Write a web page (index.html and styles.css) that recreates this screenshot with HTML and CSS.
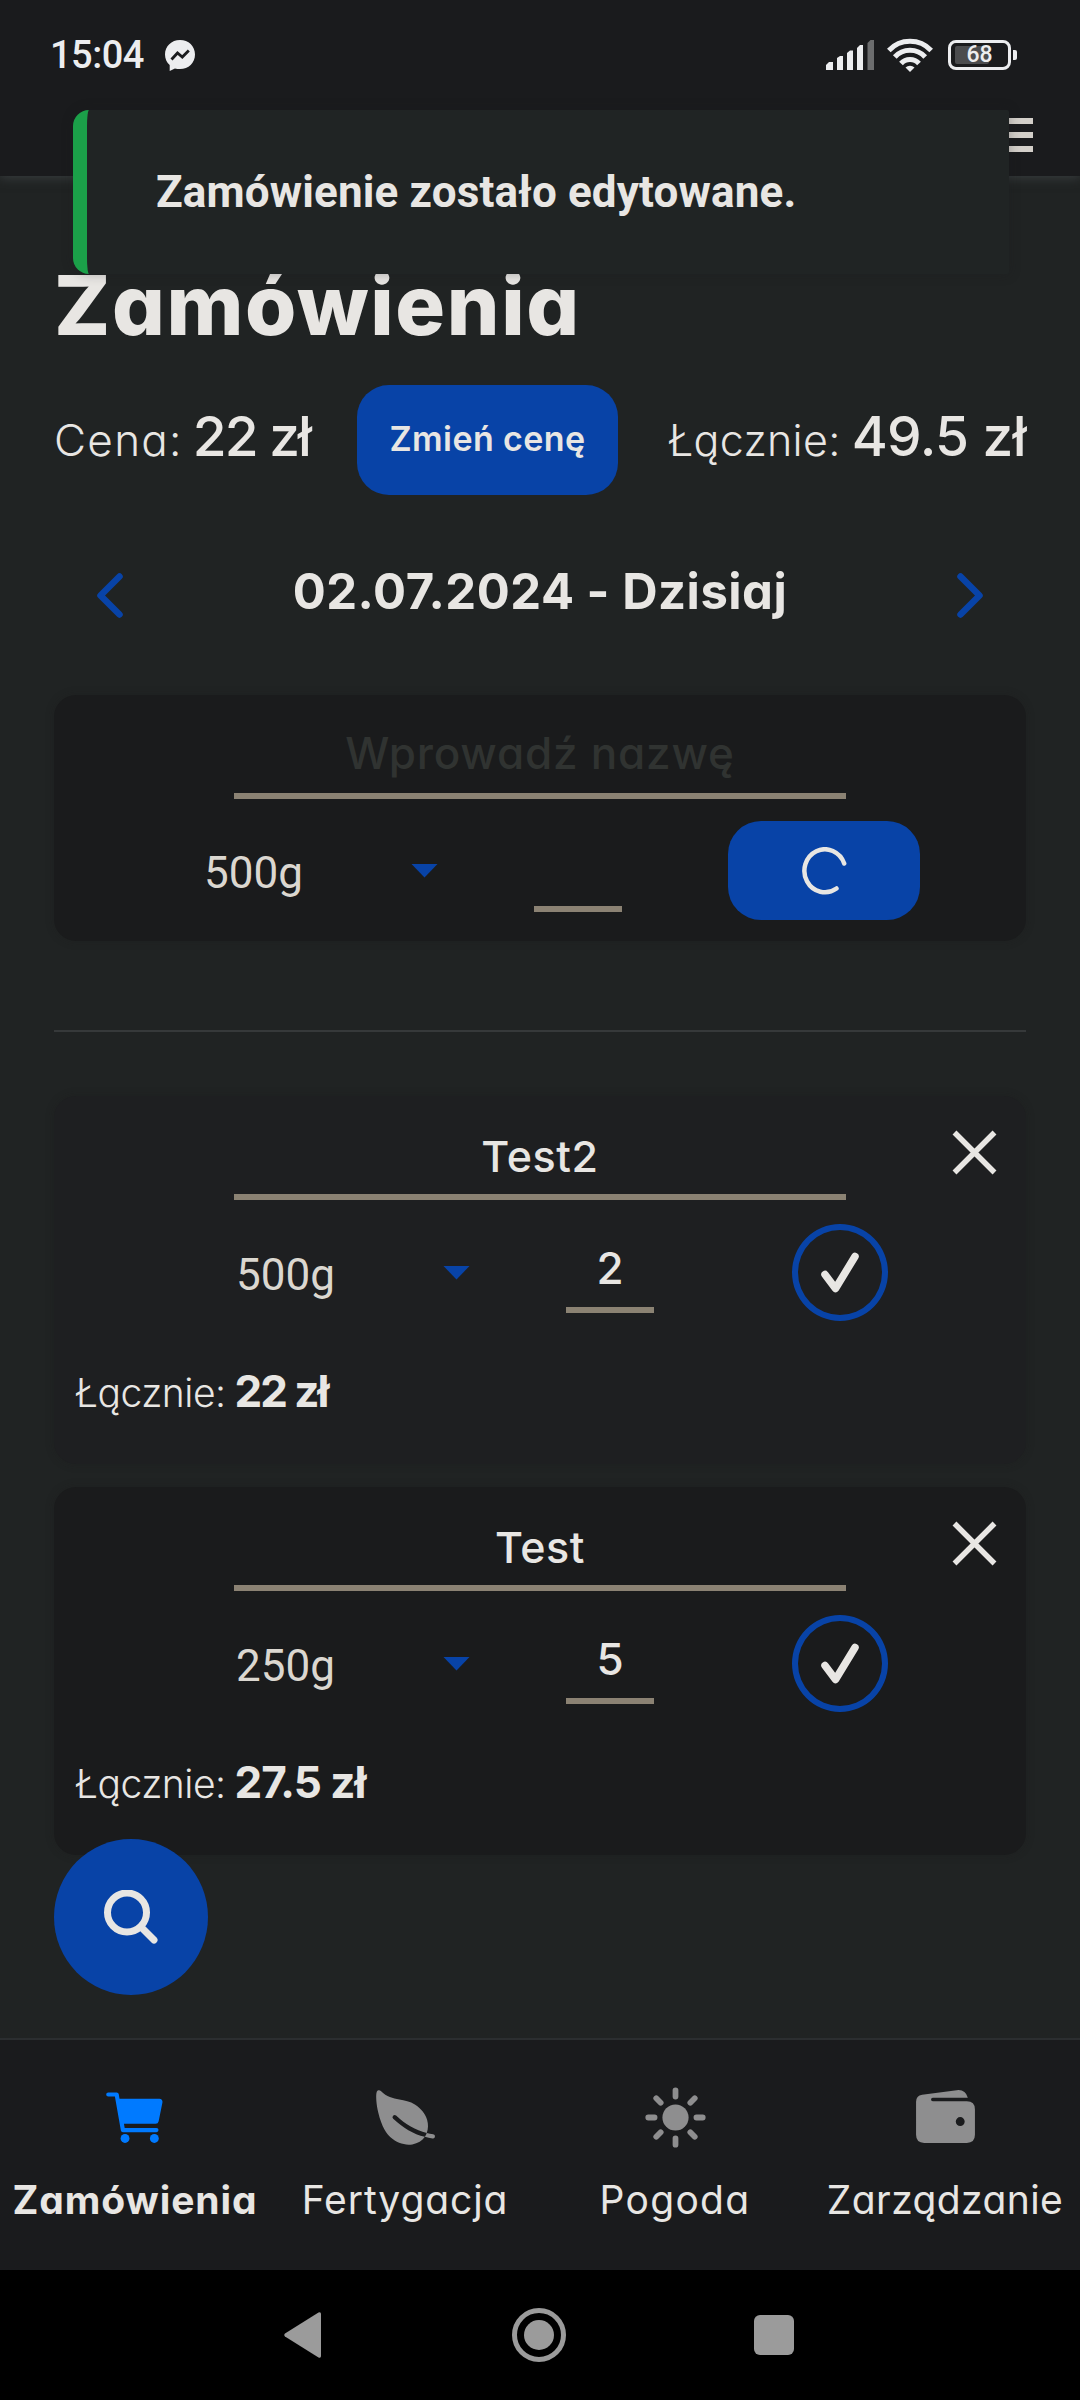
FILE: index.html
```
<!DOCTYPE html>
<html lang="pl">
<head>
<meta charset="utf-8">
<title>Zamówienia</title>
<link rel="stylesheet" href="styles.css">
</head>
<body>
<div class="app">
  <header class="topbar">
    <div class="status">
      <span class="time">15:04</span>
      <svg class="messenger" viewBox="0 0 30 31"><path fill="#ecedef" d="M15 0C6.500 0 0 6.200 0 14.500c0 4.300 1.800 8 4.700 10.600V31l5.200-2.600c1.600.5 3.300.7 5.100.7 8.500 0 15-6.200 15-14.600S23.500 0 15 0z"/><path fill="none" stroke="#1a1b1d" stroke-width="2.800" d="M6.500 19.500l6-6.500 4.800 4 6.500-6.500"/></svg>
      <svg class="signal" viewBox="0 0 48 30"><g fill="#ecedef"><path d="M0 30v-5l3-3h4v8z"/><path d="M11 30V18l3-2h3v14z"/><path d="M21 30V13l3-2.500h3V30z"/><path d="M31 30V8l3-3h3v25z"/></g><path fill="#6c6d6e" d="M41.500 30V3l3-3H48v30z"/></svg>
      <svg class="wifi" viewBox="0 0 46 34"><g fill="none" stroke="#ecedef" stroke-width="5"><path d="M1.800 12.500a29 29 0 0 1 42.400 0"/><path d="M7.800 19a20.500 20.500 0 0 1 30.400 0"/><path d="M14 25.500a12 12 0 0 1 18 0"/></g><path fill="#ecedef" d="M18.500 29.500a6.500 6.500 0 0 1 9 0L23 34z"/></svg>
      <div class="battery"><span class="level"></span><span class="percent">68</span></div>
    </div>
    <button class="menu" aria-label="Menu"><i></i><i></i><i></i></button>
  </header>

  <main class="content">
    <h1 class="title"><span>Zamówienia</span></h1>

    <section class="prices">
      <p class="price unit"><span class="label">Cena:</span><strong class="value">22 zł</strong></p>
      <button class="change"><span>Zmień cenę</span></button>
      <p class="price total"><span class="label">Łącznie:</span><strong class="value">49.5 zł</strong></p>
    </section>

    <nav class="day">
      <svg class="chevron" viewBox="0 0 26 45"><path d="M22.500 3.500L3.500 22.500l19 19"/></svg>
      <h2 class="date">02.07.2024 - Dzisiaj</h2>
      <svg class="chevron" viewBox="0 0 26 45"><path d="M3.500 3.500l19 19-19 19"/></svg>
    </nav>

    <section class="card new">
      <div class="name placeholder"><span>Wprowadź nazwę</span></div>
      <div class="fields">
        <div class="select"><span>500g</span><i class="caret"></i></div>
        <div class="qty"></div>
        <button class="submit" aria-label="Dodaj"><svg class="spinner" viewBox="0 0 46 48"><path d="M43.200 16.500A20.500 21.500 0 1 0 35.500 41.500"/></svg></button>
      </div>
    </section>

    <hr class="rule">

    <section class="orders">
      <article class="card order saved">
        <svg class="close" viewBox="0 0 45 45"><path d="M2.500 2.500l40 40m0-40l-40 40"/></svg>
        <div class="name">Test2</div>
        <div class="fields">
          <div class="select"><span>500g</span><i class="caret"></i></div>
          <div class="qty">2</div>
          <button class="done" aria-label="Gotowe"><svg class="check" viewBox="0 0 38 41"><path d="M4 22.500l10.500 14L34 4.500"/></svg></button>
        </div>
        <p class="sum"><span class="sumlabel">Łącznie:</span><strong class="sumvalue">22 zł</strong></p>
      </article>

      <article class="card order">
        <svg class="close" viewBox="0 0 45 45"><path d="M2.500 2.500l40 40m0-40l-40 40"/></svg>
        <div class="name">Test</div>
        <div class="fields">
          <div class="select"><span>250g</span><i class="caret"></i></div>
          <div class="qty">5</div>
          <button class="done" aria-label="Gotowe"><svg class="check" viewBox="0 0 38 41"><path d="M4 22.500l10.500 14L34 4.500"/></svg></button>
        </div>
        <p class="sum"><span class="sumlabel">Łącznie:</span><strong class="sumvalue">27.5 zł</strong></p>
      </article>
    </section>
  </main>

  <nav class="tabs">
    <a class="tab active"><svg class="icon" viewBox="0 0 512 512"><circle cx="176" cy="416" r="34"/><circle cx="400" cy="416" r="34"/><path d="M456.800 120.780a23.920 23.920 0 00-18.560-8.780H133.890l-6.130-34.780A16 16 0 00112 64H48a16 16 0 000 32h50.580l45.660 258.780A16 16 0 00160 368h256a16 16 0 000-32H173.420l-5.640-32h241.660A24.070 24.070 0 00433 284.710l28.800-144a24 24 0 00-5-19.930z"/></svg><span>Zamówienia</span></a>
    <a class="tab"><svg class="icon" viewBox="0 0 512 512"><path d="M161.350 242a16 16 0 0122.620-.68c73.630 69.360 147.510 111.560 234.450 133.070 11.730-32 12.770-67.220 2.640-101.580-13.440-45.590-44.740-85.310-90.490-114.860-40.840-26.380-81.660-33.250-121.150-39.890-49.820-8.380-96.880-16.300-141.790-63.850-5-5.260-11.810-7.370-18.320-5.660-7.440 2-12.430 7.880-14.820 17.600-5.600 22.750-2 86.510 13.750 153.820 25.290 108.140 65.650 162.860 95.060 189.730 38 34.690 87.620 53.900 136.930 53.900a186 186 0 0027.770-2.040c41.710-6.320 76.430-27.270 96-57.750-89.490-23.280-165.940-67.550-242-139.160a16 16 0 01-.65-22.650zM467.430 384.190c-16.830-2.590-33.130-5.840-49-9.770a157.710 157.710 0 01-12.130 25.680c-.73 1.250-1.500 2.490-2.290 3.710a584.210 584.210 0 0058.560 12 16 16 0 104.870-31.620z"/></svg><span>Fertygacja</span></a>
    <a class="tab"><svg class="icon" viewBox="0 0 512 512"><circle cx="256" cy="256" r="100"/><path class="rays" d="M256 48v48M256 416v48M48 256h48M416 256h48M108.900 108.900l33.900 33.900M369.200 369.200l33.900 33.900M108.900 403.100l33.900-33.900M369.200 142.800l33.900-33.900"/></svg><span class="wide">Pogoda</span></a>
    <a class="tab"><svg class="icon" viewBox="0 0 66 66"><path fill-rule="evenodd" d="M4 17.500Q4 11.500 10 10.500L44 6.100Q52.500 5 55 13.500H20.500a1.750 1.750 0 0 0 0 3.500H54Q62 17 62 25V50Q62 58 54 58H12Q4 58 4 50zM47.500 32.600a4.400 4.400 0 1 0 .01 8.800 4.400 4.400 0 0 0 0-8.800z"/></svg><span class="tight">Zarządzanie</span></a>
  </nav>

  <footer class="system">
    <svg viewBox="0 0 37 46"><path fill="#9b9b9b" d="M37 2v42q0 2.500-2.500 1.500L1 24.500q-1.500-1.500 0-3L34.500.5Q37-.5 37 2z"/></svg>
    <svg viewBox="0 0 54 54"><circle cx="27" cy="27" r="24.500" fill="none" stroke="#9b9b9b" stroke-width="5"/><circle cx="27" cy="27" r="15" fill="#9b9b9b"/></svg>
    <svg viewBox="0 0 40 40"><rect width="40" height="40" rx="6" fill="#9b9b9b"/></svg>
  </footer>

  <button class="search" aria-label="Szukaj"><svg viewBox="0 0 54 54"><circle cx="23" cy="22.500" r="19.500"/><path d="M37.500 37.500L50 50"/></svg></button>
  <div class="toast" role="status"><span>Zamówienie zostało edytowane.</span></div>
</div>
</body>
</html>
```
FILE: styles.css
```
* { box-sizing: border-box; }
body { margin: 0; background: #202323; }
h1, h2, p { margin: 0; }
button { padding: 0; border: 0; background: none; color: inherit; font: inherit; }
svg { display: block; }

.app {
  position: relative;
  display: flex;
  flex-direction: column;
  width: 1080px;
  height: 2400px;
  overflow: hidden;
  background: #202323;
  color: #e8e6e3;
  font-family: Inter, sans-serif;
  font-feature-settings: "cv11";
}

/* top bar */
.topbar {
  flex: none;
  height: 176px;
  background: #1a1b1d;
  box-shadow: 0 2px 10px #383d3e;
}
.status {
  display: flex;
  align-items: center;
  height: 110px;
  padding: 0 63px 0 50px;
  color: #ecedef;
  font-family: Roboto, sans-serif;
}
.time { width: 115px; font-size: 38px; font-weight: 500; line-height: 110px; letter-spacing: -.5px; }
.messenger { width: 30px; height: 31px; }
.signal { width: 48px; height: 30px; margin-left: auto; }
.wifi { width: 46px; height: 34px; margin-left: 13px; }
.battery {
  position: relative;
  display: flex;
  align-items: center;
  justify-content: center;
  width: 63px;
  height: 30px;
  margin: 0 6px 0 15px;
  border: 3px solid #ecedef;
  border-radius: 8px;
}
.battery::after {
  content: "";
  position: absolute;
  right: -9px;
  width: 4px;
  height: 10px;
  border-radius: 0 2px 2px 0;
  background: #ecedef;
}
.level { position: absolute; left: 4px; top: 3px; width: 34px; height: 18px; border-radius: 2px; background: #4b4c4e; }
.percent { position: relative; font-size: 23px; font-weight: 500; line-height: 24px; }
.menu { display: flex; flex-direction: column; gap: 8px; width: 50px; margin: 8px 0 0 983px; }
.menu i { height: 6px; background: #d3cfc9; }

/* content */
.content { flex: none; height: 1862px; padding: 79px 54px 0; }
.title { height: 100px; font-size: 83px; font-weight: 800; line-height: 100px; letter-spacing: 1.600px; }
.prices {
  display: grid;
  grid-template-columns: 303px 261px 1fr;
  align-items: center;
  height: 110px;
  margin-top: 30px;
}
.price { display: flex; align-items: baseline; line-height: 55px; margin-top: -4px; }
.total { justify-content: flex-end; }
.label { font-size: 43px; font-weight: 300; letter-spacing: .3px; }
.value { margin-left: 11px; font-size: 55px; font-weight: 500; letter-spacing: -.6px; }
.unit .label { font-size: 44px; letter-spacing: 1.300px; }
.unit .value { margin-left: 10px; letter-spacing: -2px; }
.change { height: 110px; padding-bottom: 4px; border-radius: 32px; background: #0843a7; font-size: 34px; font-weight: 600; letter-spacing: .4px; }

.day { display: flex; align-items: center; justify-content: space-between; height: 110px; margin-top: 45px; padding: 0 43px; }
.date { margin-top: -8px; font-size: 49px; font-weight: 700; letter-spacing: .5px; }
.chevron { width: 26px; height: 45px; fill: none; stroke: #0843a7; stroke-width: 6.500; stroke-linecap: round; stroke-linejoin: round; }

/* cards */
.card { position: relative; border-radius: 22px; background: #1a1b1c; box-shadow: 0 0 8px rgba(26, 27, 28, .3); }
.name {
  width: 612px;
  margin: 0 auto;
  border-bottom: 6px solid #8b8273;
  font-size: 43px;
  font-weight: 500;
  line-height: 75px;
  letter-spacing: .6px;
  text-align: center;
}
.fields { display: flex; align-items: center; height: 97px; margin-top: 24px; padding-left: 185px; }
.select {
  display: flex;
  align-items: center;
  justify-content: space-between;
  width: 231px;
  color: #dbd7d0;
  font-family: Roboto, sans-serif;
  font-size: 44px;
  line-height: 60px;
}
.select span { margin: 5px 0 0 -3px; }
.caret { width: 27px; height: 14px; background: #0843a7; clip-path: polygon(0 0, 100% 0, 50% 100%); }
.qty {
  align-self: flex-start;
  width: 88px;
  height: 83px;
  margin: 6px 0 0 96px;
  border-bottom: 6px solid #8b8273;
  font-size: 44px;
  font-weight: 500;
  line-height: 77px;
  text-align: center;
}
.new { height: 246px; margin-top: 45px; padding-top: 19px; }
.new .name { font-size: 44px; line-height: 79px; letter-spacing: .8px; }
.placeholder { color: #303331; }
.new .fields { height: 99px; margin-top: 22px; padding-left: 153px; }
.new .qty { margin-top: 8px; }
.submit { display: flex; align-items: center; justify-content: center; width: 192px; height: 99px; margin-left: 106px; border-radius: 33px; background: #0843a7; }
.spinner { width: 46px; height: 48px; fill: none; stroke: #e8e6e3; stroke-width: 4.500; stroke-linecap: round; }

.rule { height: 2px; margin: 89px 0 64px; border: 0; background: #36393a; }

.orders { display: flex; flex-direction: column; gap: 23px; }
.order { height: 368px; padding-top: 23px; }
.saved { background: #1e1f21; }
.done { display: flex; align-items: center; justify-content: center; width: 96px; height: 97px; margin-left: 138px; border: 6px solid #0843a7; border-radius: 50%; }
.check { width: 38px; height: 41px; fill: none; stroke: #e8e6e3; stroke-width: 7.500; stroke-linecap: round; stroke-linejoin: round; }
.close { position: absolute; top: 34px; right: 29px; width: 45px; height: 45px; fill: none; stroke: #e8e6e3; stroke-width: 5.500; }
.sum { display: flex; align-items: baseline; margin: 48px 0 0 21px; line-height: 44px; }
.sumlabel { font-size: 39px; font-weight: 300; letter-spacing: -.5px; }
.sumvalue { margin-left: 9px; font-size: 44px; font-weight: 700; letter-spacing: -1px; }
.saved .sumvalue { letter-spacing: -2px; }

/* bottom tabs */
.tabs {
  flex: none;
  display: grid;
  grid-template-columns: repeat(4, 270px);
  height: 232px;
  border-top: 2px solid #2b2e30;
  background: #1a1b1d;
}
.tab { display: flex; flex-direction: column; align-items: center; padding-top: 44px; font-size: 39px; font-weight: 400; line-height: 60px; letter-spacing: .9px; }
.tab span { margin-top: 19px; }
.tab .wide { letter-spacing: 1.300px; }
.tab .tight { letter-spacing: .4px; }
.icon { width: 67px; height: 67px; fill: #8e8e8f; }
.rays { stroke: #8e8e8f; stroke-width: 44; stroke-linecap: round; }
.active { font-weight: 700; }
.active .icon { fill: #007aff; }

/* system navigation */
.system { flex: none; display: flex; align-items: center; height: 130px; padding-left: 284px; background: #000; }
.system svg:nth-child(1) { width: 37px; height: 46px; }
.system svg:nth-child(2) { width: 54px; height: 54px; margin-left: 191px; }
.system svg:nth-child(3) { width: 40px; height: 40px; margin-left: 188px; }

/* overlays */
.search { position: absolute; left: 54px; top: 1839px; display: flex; align-items: center; justify-content: center; width: 154px; height: 156px; border-radius: 50%; background: #0843a7; }
.search svg { width: 54px; height: 54px; fill: none; stroke: #e8e6e3; stroke-width: 7; stroke-linecap: round; }
.toast {
  position: absolute;
  left: 73px;
  top: 110px;
  display: flex;
  align-items: center;
  width: 936px;
  height: 164px;
  padding-left: 69px;
  border-left: 14px solid #1ba049;
  border-radius: 16px 2px 2px 16px;
  background: #202424;
  box-shadow: 0 0 12px rgba(26, 27, 29, .3);
  font-family: Roboto, sans-serif;
  font-size: 44px;
  font-weight: 700;
  letter-spacing: .15px;
}
```
